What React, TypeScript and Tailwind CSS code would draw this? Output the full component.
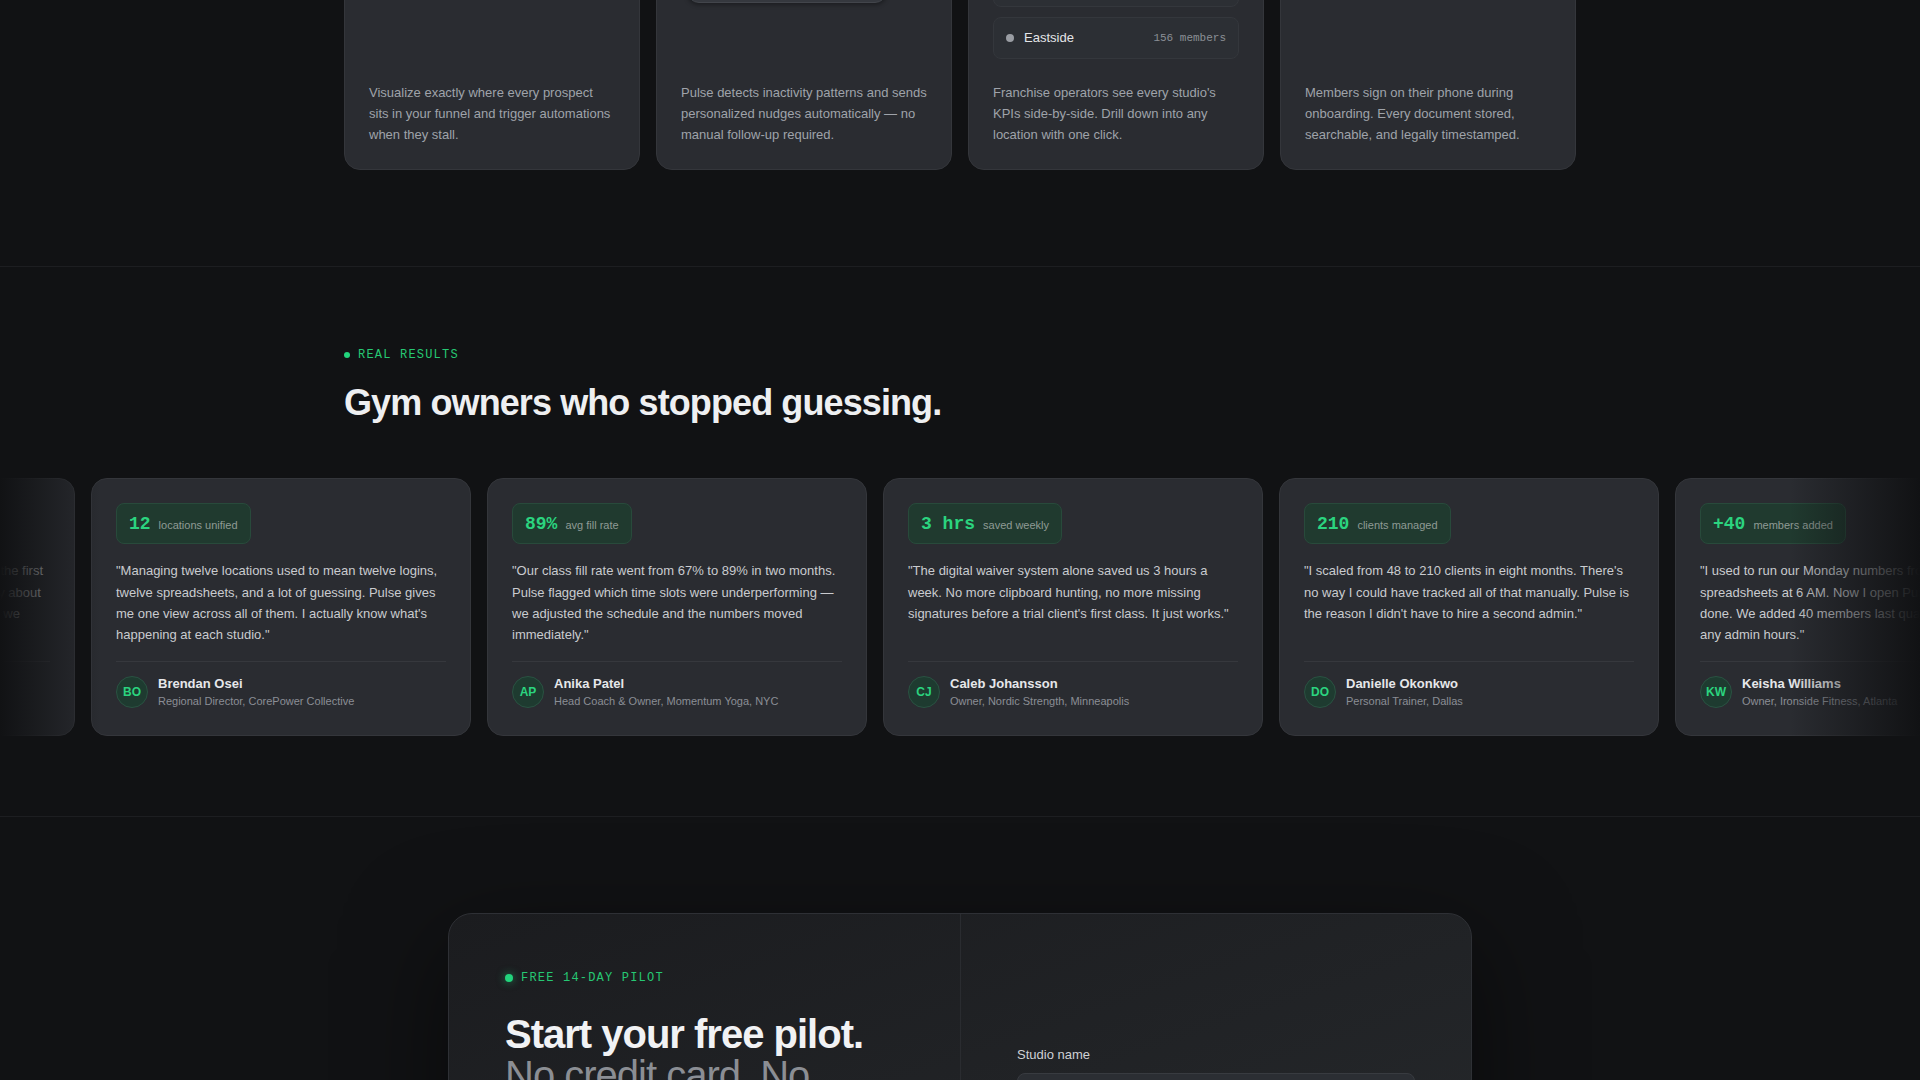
import type { ReactNode } from "react";

type Testimonial = {
  stat: string;
  label: string;
  quote: string;
  name: string;
  initials: string;
  role: string;
};

const testimonials: Testimonial[] = [
  {
    stat: "2x",
    label: "trial conversion",
    quote:
      "\"We used to lose half of our trial customers after the first class. Pulse tells us who to email and what to say about their progress. Our conversion rate doubled, and we haven't looked back since.\"",
    name: "Marcus Reyes",
    initials: "MR",
    role: "Owner, Iron Republic, Austin",
  },
  {
    stat: "12",
    label: "locations unified",
    quote:
      "\"Managing twelve locations used to mean twelve logins, twelve spreadsheets, and a lot of guessing. Pulse gives me one view across all of them. I actually know what's happening at each studio.\"",
    name: "Brendan Osei",
    initials: "BO",
    role: "Regional Director, CorePower Collective",
  },
  {
    stat: "89%",
    label: "avg fill rate",
    quote:
      "\"Our class fill rate went from 67% to 89% in two months. Pulse flagged which time slots were underperforming — we adjusted the schedule and the numbers moved immediately.\"",
    name: "Anika Patel",
    initials: "AP",
    role: "Head Coach & Owner, Momentum Yoga, NYC",
  },
  {
    stat: "3 hrs",
    label: "saved weekly",
    quote:
      "\"The digital waiver system alone saved us 3 hours a week. No more clipboard hunting, no more missing signatures before a trial client's first class. It just works.\"",
    name: "Caleb Johansson",
    initials: "CJ",
    role: "Owner, Nordic Strength, Minneapolis",
  },
  {
    stat: "210",
    label: "clients managed",
    quote:
      "\"I scaled from 48 to 210 clients in eight months. There's no way I could have tracked all of that manually. Pulse is the reason I didn't have to hire a second admin.\"",
    name: "Danielle Okonkwo",
    initials: "DO",
    role: "Personal Trainer, Dallas",
  },
  {
    stat: "+40",
    label: "members added",
    quote:
      "\"I used to run our Monday numbers from four spreadsheets at 6 AM. Now I open Pulse and it's already done. We added 40 members last quarter without adding any admin hours.\"",
    name: "Keisha Williams",
    initials: "KW",
    role: "Owner, Ironside Fitness, Atlanta",
  },
];

const locations = [
  { name: "Downtown", members: "342 members", active: true },
  { name: "Westside", members: "218 members", active: true },
  { name: "Eastside", members: "156 members", active: false },
];

function Eyebrow({ children, dot = "small" }: { children: ReactNode; dot?: "small" | "large" }) {
  return (
    <div className="flex items-center gap-2">
      <span
        className={
          dot === "large"
            ? "size-2 rounded-full bg-[#22d47c] shadow-[0_0_8px_rgba(34,212,124,0.6)]"
            : "size-1.5 rounded-full bg-[#22d47c]"
        }
      />
      <span className="font-['Liberation_Mono',monospace] text-xs uppercase tracking-widest text-[#26c873]">
        {children}
      </span>
    </div>
  );
}

function FeatureCard({ children, text }: { children: ReactNode; text: string }) {
  return (
    <div className="flex flex-col rounded-2xl border border-[#34363b] bg-[#2a2c31] p-6">
      <div className="flex h-[234px] flex-col">{children}</div>
      <p className="mt-[23px] text-[13px] leading-relaxed text-[#9fa3aa]">{text}</p>
    </div>
  );
}

function TestimonialCard({ t }: { t: Testimonial }) {
  return (
    <div className="flex w-[380px] shrink-0 flex-col rounded-2xl border border-[#34363b] bg-[#2a2c31] px-6 pb-[27px] pt-6">
      <div className="flex h-[41px] items-center self-start rounded-lg border border-[#284a3b] bg-[#203a2f] px-3">
        <div className="flex items-baseline gap-2">
          <span className="font-['Liberation_Mono',monospace] text-lg font-bold text-[#2bd47f]">{t.stat}</span>
          <span className="text-[11px] text-[#8f9a95]">{t.label}</span>
        </div>
      </div>
      <p className="mt-4 flex-1 text-[13px] leading-relaxed text-[#c9cbcf]">{t.quote}</p>
      <div className="mt-4 flex items-center gap-2.5 border-t border-[#36383d] pt-3.5">
        <div className="flex size-8 shrink-0 items-center justify-center rounded-full border border-[#2a5242] bg-[#1e3b30] text-xs font-bold text-[#2bd47f]">
          {t.initials}
        </div>
        <div>
          <div className="text-[13px] font-semibold leading-4 text-[#e6e7ea]">{t.name}</div>
          <div className="mt-0.5 text-[11px] leading-[14px] text-[#8a8e95]">{t.role}</div>
        </div>
      </div>
    </div>
  );
}

export default function App() {
  return (
    <div className="h-screen overflow-hidden bg-[#111214] font-['Liberation_Sans',Arial,sans-serif]">
      {/* Feature cards */}
      <section className="overflow-hidden border-b border-[#1d1e21] pb-24">
        <div className="mx-auto -mt-[200px] grid max-w-7xl grid-cols-4 gap-4 px-6">
          <FeatureCard text="Visualize exactly where every prospect sits in your funnel and trigger automations when they stall.">
            <div className="flex flex-col gap-2">
              {["Lead", "Trial", "Member"].map((stage, i) => (
                <div key={stage} className="flex items-center justify-between rounded-lg bg-[#2f3237] px-3 py-2">
                  <span className="text-xs text-[#d1d3d7]">{stage}</span>
                  <span className="font-['Liberation_Mono',monospace] text-[11px] text-[#8b8f96]">{[48, 21, 12][i]}</span>
                </div>
              ))}
            </div>
          </FeatureCard>

          <FeatureCard text="Pulse detects inactivity patterns and sends personalized nudges automatically — no manual follow-up required.">
            <div className="flex flex-1 flex-col justify-end gap-3 pb-[56px]">
              <div className="ml-auto w-[160px] rounded-2xl bg-[#1f3a2f] px-3 py-2 text-[11px] text-[#9fd9b9]">
                Missed 3 classes
              </div>
              <div className="ml-1.5 h-9 w-[200px] rounded-xl border border-[#42454b] bg-[#35383e] shadow-[0_2px_4px_rgba(0,0,0,0.35)]" />
            </div>
          </FeatureCard>

          <FeatureCard text="Franchise operators see every studio's KPIs side-by-side. Drill down into any location with one click.">
            <div className="flex flex-1 flex-col justify-end gap-2.5">
              {locations.map((loc) => (
                <div
                  key={loc.name}
                  className="flex h-[42px] items-center justify-between rounded-lg border border-[#34373c] bg-[#2c2f34] px-3"
                >
                  <div className="flex items-center gap-2.5">
                    <span className={loc.active ? "size-2 rounded-full bg-[#22d47c]" : "size-2 rounded-full bg-[#9a9da3]"} />
                    <span className="text-[13px] text-[#e4e5e8]">{loc.name}</span>
                  </div>
                  <span className="font-['Liberation_Mono',monospace] text-[11px] text-[#8b8f96]">{loc.members}</span>
                </div>
              ))}
            </div>
          </FeatureCard>

          <FeatureCard text="Members sign on their phone during onboarding. Every document stored, searchable, and legally timestamped.">
            <div className="flex flex-col gap-2 rounded-xl border border-[#34373c] bg-[#2c2f34] p-4">
              <div className="h-2 w-3/4 rounded bg-[#3a3d43]" />
              <div className="h-2 w-1/2 rounded bg-[#3a3d43]" />
              <div className="mt-3 h-10 rounded-lg border border-dashed border-[#44474d]" />
            </div>
          </FeatureCard>
        </div>
      </section>

      {/* Testimonials */}
      <section className="border-b border-[#1d1e21] pb-20 pt-20">
        <div className="mx-auto max-w-7xl px-6">
          <Eyebrow>Real results</Eyebrow>
          <h2 className="mt-5 text-4xl font-bold tracking-tight text-[#eeeff1]">Gym owners who stopped guessing.</h2>
        </div>
        <div className="relative mt-[55px] overflow-hidden">
          <div className="-ml-[305px] flex w-max gap-4">
            {testimonials.map((t) => (
              <TestimonialCard key={t.name} t={t} />
            ))}
          </div>
          <div className="pointer-events-none absolute inset-y-0 left-0 w-[100px] bg-linear-to-r from-[#111214] to-transparent" />
          <div className="pointer-events-none absolute inset-y-0 right-0 w-[130px] bg-linear-to-l from-[#111214] to-transparent" />
        </div>
      </section>

      {/* Pilot signup */}
      <section className="pt-24">
        <div className="mx-auto grid max-w-5xl grid-cols-2 overflow-hidden rounded-3xl border border-[#2e3035] bg-linear-to-br from-[#1b1c1f] to-[#26292c] shadow-[0_30px_100px_rgba(0,0,0,0.5)]">
          <div className="p-14">
            <Eyebrow dot="large">Free 14-day pilot</Eyebrow>
            <h2 className="mt-7 text-[40px] font-bold leading-[1.03] tracking-tight text-[#f1f2f4]">
              Start your free pilot.
              <br />
              <span className="font-normal text-[#8b8e94]">No credit card. No setup fees.</span>
            </h2>
            <p className="mt-6 text-sm leading-relaxed text-[#9fa3aa]">
              We migrate your members, schedules and waivers for you. Cancel any time during the pilot.
            </p>
          </div>
          <div className="border-l border-[#2a2c30] px-14 pb-14 pt-[131px]">
            <label className="mb-2 block text-[13px] leading-5 text-[#cfd1d5]">Studio name</label>
            <div className="h-11 w-full rounded-lg border border-[#383b40] bg-[#2b2e33]" />
            <label className="mb-2 mt-5 block text-[13px] leading-5 text-[#cfd1d5]">Work email</label>
            <div className="h-11 w-full rounded-lg border border-[#383b40] bg-[#2b2e33]" />
          </div>
        </div>
      </section>
    </div>
  );
}
